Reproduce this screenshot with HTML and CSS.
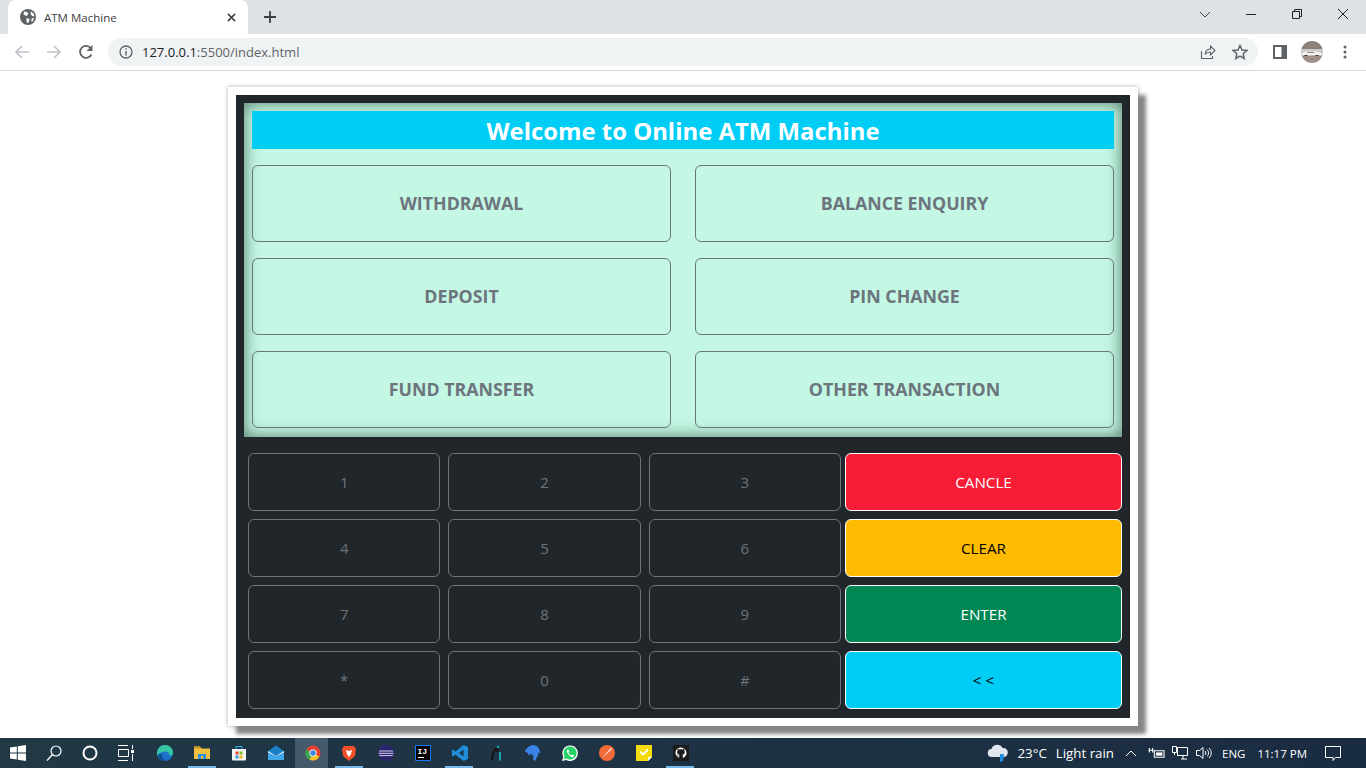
FILE: index.html
```html
<!DOCTYPE html>
<html lang="en">
<head>
    <meta charset="UTF-8">
    <meta name="viewport" content="width=device-width, initial-scale=1.0">
    <title>ATM Machine</title>
    <link rel="stylesheet" href="styles.css">
</head>
<body>
    <!-- browser window top -->
    <div class="tabstrip">
        <div class="tab">
            <svg class="favicon" viewBox="0 0 16 16"><circle cx="8" cy="8" r="8" fill="#5f6368"/><path d="M4 2.500l3 .5 1.500 2-2 2-3-1.500zM6.500 9l3 1-.5 2.500-1.500 2-1-2zM11 2.500l2.500 2 1 3-2.500-.5-1.500-2.500zM11.500 9.500l2.500-.5-1 3-1.500 1z" fill="#fff"/></svg>
            <span class="tab-title">ATM Machine</span>
            <svg class="tab-close" viewBox="0 0 10 10"><path d="M1 1l8 8M9 1l-8 8" stroke="#3c4043" stroke-width="1.700"/></svg>
        </div>
        <svg class="new-tab" viewBox="0 0 12 12"><path d="M6 0v12M0 6h12" stroke="#3c4043" stroke-width="1.800"/></svg>
        <div class="window-btns">
            <svg class="win-btn" viewBox="0 0 46 14"><path d="M18 5l5 5 5-5" fill="none" stroke="#3c4043"/></svg>
            <svg class="win-btn" viewBox="0 0 46 14"><path d="M18 7.500h10" fill="none" stroke="#202124"/></svg>
            <svg class="win-btn" viewBox="0 0 46 14"><path d="M18.500 4.500h7v7h-7zM20.500 4.500v-2h7v7h-2" fill="none" stroke="#202124"/></svg>
            <svg class="win-btn" viewBox="0 0 46 14"><path d="M18 2l10 10M28 2l-10 10" fill="none" stroke="#202124"/></svg>
        </div>
    </div>
    <div class="toolbar">
        <svg class="nav-icon nav-back" viewBox="0 0 16 16"><path d="M15 8H2M8 2L2 8l6 6" fill="none" stroke="#bdc1c6" stroke-width="1.600"/></svg>
        <svg class="nav-icon nav-forward" viewBox="0 0 16 16"><path d="M1 8h13M8 2l6 6-6 6" fill="none" stroke="#bdc1c6" stroke-width="1.600"/></svg>
        <svg class="nav-icon nav-reload" viewBox="0 0 16 16"><path d="M13.500 10.500A6 6 0 1 1 13 4.500" fill="none" stroke="#5f6368" stroke-width="1.800"/><path d="M14.500 1v6h-6z" fill="#5f6368"/></svg>
        <div class="omnibox">
            <svg class="info-icon" viewBox="0 0 14 14"><circle cx="7" cy="7" r="6" fill="none" stroke="#5f6368" stroke-width="1.300"/><path d="M7 6v4.500M7 3.300v1.500" stroke="#5f6368" stroke-width="1.400"/></svg>
            <span class="url"><span class="url-host">127.0.0.1</span>:5500/index.html</span>
            <svg class="omni-share" viewBox="0 0 16 16"><path d="M1.500 7v7.500h11V12M5 10.500C5.500 7 8 5 10.500 5V2l4.500 4.500-4.500 4.500V8C8.500 8 6.500 8.500 5 10.500z" fill="none" stroke="#5f6368" stroke-width="1.100"/></svg>
            <svg class="omni-star" viewBox="0 0 16 16"><path d="M8 1.500l2 4.500 4.800.5-3.600 3.200 1 4.800L8 12l-4.200 2.500 1-4.800L1.200 6.500 6 6z" fill="none" stroke="#5f6368" stroke-width="1.500"/></svg>
        </div>
        <svg class="side-panel" viewBox="0 0 14 14"><path d="M0 0h14v14H0z" fill="#5f6368"/><path d="M2 2h6.500v10H2z" fill="#fff"/></svg>
        <svg class="avatar" viewBox="0 0 22 22"><defs><clipPath id="avatarClip"><circle cx="11" cy="11" r="11"/></clipPath></defs><g clip-path="url(#avatarClip)"><path d="M0 0h22v8H0z" fill="#8d7f7a"/><path d="M0 8h22v6H0z" fill="#cdc9c8"/><path d="M0 14h22v8H0z" fill="#a08d87"/><path d="M1 12.500l4-2.500h8l6 1.500 2 1.500v1.500H1z" fill="#f4f3f3"/><path d="M6.500 10.800h6l1.500 1H5.500z" fill="#77716f"/><path d="M3.500 14.500h3M14.500 14.500h3" stroke="#333" stroke-width="1.200"/></g></svg>
        <svg class="menu-dots" viewBox="0 0 4 14"><circle cx="2" cy="2" r="1.500" fill="#5f6368"/><circle cx="2" cy="7" r="1.500" fill="#5f6368"/><circle cx="2" cy="12" r="1.500" fill="#5f6368"/></svg>
    </div>

    <!-- the page -->
    <main class="page">
        <div class="card">
            <div class="panel">
                <section class="screen">
                    <h1 class="welcome">Welcome to Online ATM Machine</h1>
                    <div class="options">
                        <button class="option">WITHDRAWAL</button>
                        <button class="option">BALANCE ENQUIRY</button>
                        <button class="option">DEPOSIT</button>
                        <button class="option">PIN CHANGE</button>
                        <button class="option">FUND TRANSFER</button>
                        <button class="option">OTHER TRANSACTION</button>
                    </div>
                </section>
                <section class="keypad">
                    <div class="digits">
                        <button class="key">1</button>
                        <button class="key">2</button>
                        <button class="key">3</button>
                        <button class="key">4</button>
                        <button class="key">5</button>
                        <button class="key">6</button>
                        <button class="key">7</button>
                        <button class="key">8</button>
                        <button class="key">9</button>
                        <button class="key">*</button>
                        <button class="key">0</button>
                        <button class="key">#</button>
                    </div>
                    <div class="actions">
                        <button class="action action-red">CANCLE</button>
                        <button class="action action-yellow">CLEAR</button>
                        <button class="action action-green">ENTER</button>
                        <button class="action action-cyan">&lt; &lt;</button>
                    </div>
                </section>
            </div>
        </div>
    </main>

    <!-- windows taskbar -->
    <footer class="taskbar">
        <div class="sys-icons">
            <div class="slot"><svg class="ico" viewBox="0 0 16 16"><path d="M0 2.500L6.800 1.500v6H0zM7.800 1.300L16 0v7.500H7.800zM0 8.500h6.800v6L0 13.500zM7.800 8.500H16V16l-8.200-1.300z" fill="#fff"/></svg></div>
            <div class="slot"><svg class="ico" viewBox="0 0 16 16"><circle cx="10" cy="6" r="5" fill="none" stroke="#fff" stroke-width="1.200"/><path d="M6.500 9.500L1 15.500" stroke="#fff" stroke-width="1.300"/></svg></div>
            <div class="slot"><svg class="ico" viewBox="0 0 16 16"><circle cx="8" cy="8" r="6.500" fill="none" stroke="#fff" stroke-width="2"/></svg></div>
            <div class="slot"><svg class="ico" viewBox="0 0 16 16"><path d="M0 .5h10M0 15.500h10M.5 4.500h10v7H.5z" fill="none" stroke="#fff"/><path d="M13 5h3v3h-3z" fill="#fff"/><path d="M14.500 0v4M14.500 9v7" stroke="#fff"/></svg></div>
        </div>
        <div class="apps">
            <div class="slot"><svg class="ico" viewBox="0 0 16 16"><circle cx="8" cy="8" r="8" fill="#1b74c9"/><path d="M0 8a8 8 0 0 1 16 0c0 2-2 3-4 2.500 1-2-.5-4-3.500-4C5 6.500 2 8 0 11z" fill="#37c6a0"/><path d="M5 9c-1 3 2 6 5 6.500C6 17 1 13 1 9z" fill="#0c4f96"/></svg></div>
            <div class="slot slot-open"><svg class="ico" viewBox="0 0 16 16"><path d="M0 1.500h6l1.500 2H16V14H0z" fill="#f3c03f"/><path d="M0 1.500h6l1.500 2H0z" fill="#c99320"/><path d="M4 9h8v5H4z" fill="#2f8fd8"/><path d="M7 11h2v3H7z" fill="#f3c03f"/></svg></div>
            <div class="slot"><svg class="ico" viewBox="0 0 16 16"><path d="M1 4h14v10.500a1 1 0 0 1-1 1H2a1 1 0 0 1-1-1z" fill="#f4f4f4"/><path d="M5 4V1.500h6V4" fill="none" stroke="#29b6e6"/><path d="M4.500 6.500h3v3h-3z" fill="#e8492e"/><path d="M8.500 6.500h3v3h-3z" fill="#7fba2a"/><path d="M4.500 10.500h3v3h-3z" fill="#2a9fe0"/><path d="M8.500 10.500h3v3h-3z" fill="#f6b81c"/></svg></div>
            <div class="slot"><svg class="ico" viewBox="0 0 16 16"><path d="M0 6l8-5.500L16 6v9H0z" fill="#1a7fc4"/><path d="M0 6l8 5 8-5v1.500l-8 4-8-4z" fill="#fff"/><path d="M0 7.500l8 4 8-4V15H0z" fill="#3fa9e8"/></svg></div>
            <div class="slot slot-active"><svg class="ico" viewBox="0 0 16 16"><circle cx="8" cy="8" r="7.500" fill="#e5432f"/><path d="M8 8L14.500 11.500A7.500 7.500 0 0 1 4 14.500z" fill="#f6c324"/><path d="M8 8L4.500 14.800A7.500 7.500 0 0 1 1.300 4.500z" fill="#38a852"/><circle cx="8" cy="8" r="3.600" fill="#fff"/><circle cx="8" cy="8" r="2.700" fill="#3b82e6"/></svg></div>
            <div class="slot slot-open"><svg class="ico" viewBox="0 0 16 16"><path d="M3 1h10l2 3-1 7-6 5-6-5-1-7z" fill="#f0502a"/><path d="M5 5l3 1 3-1-1 4-2 3-2-3z" fill="#fff"/></svg></div>
            <div class="slot"><svg class="ico" viewBox="0 0 16 16"><circle cx="8" cy="8" r="8" fill="#2d2470"/><path d="M1 6h14M.5 8.300h15M1.200 10.600h13.600" stroke="#d7d3ea" stroke-width="1"/></svg></div>
            <div class="slot"><svg class="ico" viewBox="0 0 16 16"><path d="M.5.5h15v15H.5z" fill="#000" stroke="#1479ff"/><path d="M3 12.500h6" stroke="#fff"/><text class="ij-text" x="2.500" y="9">IJ</text></svg></div>
            <div class="slot slot-open"><svg class="ico" viewBox="0 0 16 16"><path d="M11.500 0L16 2v12l-4.500 2L3.500 9.500 1 11.500 0 11V5l1-.5 2.500 2zM11.500 4.500L7 8l4.500 3.500z" fill="#1f8fdc"/></svg></div>
            <div class="slot"><svg class="ico" viewBox="0 0 16 16"><path d="M3 15.500C3.500 10 5 4 7.500 4c1 0 1 1 1 3" fill="none" stroke="#111" stroke-width="2"/><path d="M11 7v8.500" stroke="#19a3a8" stroke-width="2"/><circle cx="9" cy="1.800" r="1.300" fill="#19a3a8"/></svg></div>
            <div class="slot"><svg class="ico" viewBox="0 0 16 16"><path d="M0 6.500C1 3 5 0 8 0c3.500 0 6 2.500 6.500 5l1 3-2-.5c-.3 3-1.500 5-2.500 6.500l-.5 2-2.500-1.500c.8-2 .5-4-1-5L5 8.500 4.500 11 2.500 8z" fill="#3b82e6"/></svg></div>
            <div class="slot"><svg class="ico" viewBox="0 0 16 16"><path d="M0 16l1.200-4.200A7.800 7.800 0 1 1 4.300 15z" fill="#fff"/><path d="M1.800 14.200l.8-2.800A6.500 6.500 0 1 1 4.700 13.500z" fill="#25d366"/><path d="M5.500 4.500c-1 1-1 2.500 1 5s3.500 3 5 2.500l.7-1.500-2-1-1 .8C8.500 10.300 7 9 6.500 7.500l.8-1-.9-2z" fill="#fff"/></svg></div>
            <div class="slot"><svg class="ico" viewBox="0 0 16 16"><circle cx="8" cy="8" r="8" fill="#f26b38"/><path d="M3 13L12 3l1 1z" fill="#fff"/></svg></div>
            <div class="slot"><svg class="ico" viewBox="0 0 16 16"><path d="M0 0h16v12l-4 4H0z" fill="#f5dc0c"/><path d="M12 16v-4h4z" fill="#fff"/><path d="M4 6.500l3 3 5-5" fill="none" stroke="#fff" stroke-width="1.800"/></svg></div>
            <div class="slot slot-open"><svg class="ico" viewBox="0 0 16 16"><path d="M0 0h16v16H0z" fill="#1b1b1b"/><path d="M8 2.500c-3 0-5.500 2.300-5.500 5.300 0 2.300 1.500 4.300 3.700 5v-1.500c-1.500.3-1.900-.7-2-1.100-.3-.6-.7-.8-.7-.8.7-.1 1.100.6 1.200.8.600.9 1.300.7 1.600.5 0-.4.200-.7.400-.9-1.400-.2-2.600-.7-2.600-2.800 0-.6.200-1.100.6-1.500 0-.2-.2-.8.100-1.500 0 0 .6-.2 1.700.6a5 5 0 0 1 3 0c1.100-.8 1.700-.6 1.700-.6.300.7.100 1.300 0 1.500.4.400.6.900.6 1.500 0 2.100-1.200 2.600-2.500 2.800.3.200.5.600.5 1.200v2.100c2.200-.7 3.700-2.700 3.700-5 0-3-2.500-5.300-5.500-5.300z" fill="#fff"/></svg></div>
        </div>
        <div class="tray">
            <svg class="tray-cloud" viewBox="0 0 22 20"><path d="M5 14a4 4 0 0 1-.5-8A6 6 0 0 1 15.500 5 4.500 4.500 0 0 1 17 14z" fill="#dfe6ee"/><path d="M13 11h4l-1 7-3 1z" fill="#1d8fe0"/></svg>
            <span class="tray-temp">23°C</span>
            <span class="tray-weather">Light rain</span>
            <svg class="tray-chevron" viewBox="0 0 12 8"><path d="M1 7l5-5 5 5" fill="none" stroke="#fff"/></svg>
            <svg class="tray-battery" viewBox="0 0 16 12"><path d="M5.500 3.500h9v6h-9z" fill="none" stroke="#fff"/><path d="M7 5h6v3H7z" fill="#fff"/><path d="M1 1v4M4 1v4M0 3h5" stroke="#fff"/></svg>
            <svg class="tray-net" viewBox="0 0 16 14"><path d="M5.500 1.500h10v8h-10zM9 13h6M11 10v3" fill="none" stroke="#fff"/><path d="M.5.500h4v6h-4zM2.500 7v2" fill="none" stroke="#fff"/></svg>
            <svg class="tray-vol" viewBox="0 0 16 14"><path d="M.5 4.500h3L7 1.500v11l-3.500-3h-3z" fill="none" stroke="#fff"/><path d="M9 5c1 1 1 3 0 4M11 3.500c2 2 2 5 0 7M13 2c3 3 3 7 0 10" fill="none" stroke="#fff"/></svg>
            <span class="tray-lang">ENG</span>
            <span class="tray-time">11:17 PM</span>
            <svg class="tray-notify" viewBox="0 0 16 15"><path d="M.5.500h15v11h-5l-2.500 3v-3H.5z" fill="none" stroke="#fff"/></svg>
        </div>
    </footer>
</body>
</html>
```

FILE: styles.css
```css
* {
    box-sizing: border-box;
}

html, body {
    margin: 0;
    height: 768px;
    overflow: hidden;
}

body {
    display: flex;
    flex-direction: column;
    font-family: "Open Sans", "Noto Sans", sans-serif;
    background-color: #fff;
}

/* browser chrome */
.tabstrip {
    height: 34px;
    background-color: #dee1e6;
    display: flex;
    align-items: flex-start;
    padding-left: 8px;
}

.tab {
    width: 240px;
    height: 34px;
    background-color: #fff;
    border-radius: 8px 8px 0 0;
    display: flex;
    align-items: center;
    padding: 0 12px;
}

.favicon {
    width: 16px;
    height: 16px;
}

.tab-title {
    margin-left: 8px;
    font-size: 11.5px;
    color: #3c4043;
    flex: 1;
}

.tab-close {
    width: 9px;
    height: 9px;
}

.new-tab {
    width: 12px;
    height: 12px;
    margin: 11px 0 0 16px;
}

.window-btns {
    margin-left: auto;
    display: flex;
    margin-top: 7px;
}

.win-btn {
    width: 46px;
    height: 14px;
}

.toolbar {
    height: 37px;
    background-color: #fff;
    border-bottom: 1px solid #dadce0;
    display: flex;
    align-items: center;
    padding: 0 0 1px 14px;
}

.nav-icon {
    width: 16px;
    height: 16px;
}

.nav-forward {
    margin-left: 16px;
}

.nav-reload {
    margin-left: 16px;
}

.omnibox {
    width: 1150px;
    height: 28px;
    margin-left: 14px;
    border-radius: 14px;
    background-color: #f0f3f4;
    display: flex;
    align-items: center;
    padding-left: 11px;
}

.info-icon {
    width: 14px;
    height: 14px;
}

.url {
    margin-left: 9px;
    font-size: 13px;
    color: #5f6368;
}

.url-host {
    color: #202124;
}

.omni-share {
    width: 16px;
    height: 16px;
    margin-left: auto;
}

.omni-star {
    width: 16px;
    height: 16px;
    margin: 0 10px 0 16px;
}

.side-panel {
    width: 14px;
    height: 14px;
    margin-left: 15px;
}

.avatar {
    width: 22px;
    height: 22px;
    margin-left: 14px;
}

.menu-dots {
    width: 4px;
    height: 14px;
    margin-left: 20px;
}

/* page */
.page {
    flex: 1;
    display: flex;
    justify-content: center;
    align-items: flex-start;
    padding-top: 16px;
    min-height: 0;
}

.card {
    width: 910px;
    height: 639px;
    padding: 8px;
    background-color: #fff;
    box-shadow: 8px 8px 4px #868686, 0 0 4px rgba(0, 0, 0, 0.35);
}

.panel {
    height: 623px;
    padding: 8px 8px 9px;
    background-color: #20262a;
}

.screen {
    height: 334px;
    padding: 8px;
    background-color: #c4f7e4;
    box-shadow: inset 0 0 16px rgba(30, 70, 50, 0.7);
}

.welcome {
    margin: 0;
    height: 38px;
    line-height: 40px;
    text-align: center;
    font-size: 23.9px;
    font-weight: 700;
    color: #fff;
    background-color: #00cdf5;
}

.options {
    margin-top: 16px;
    display: grid;
    grid-template-columns: 419px 419px;
    justify-content: space-between;
    grid-auto-rows: 77px;
    row-gap: 16px;
}

button {
    font-family: inherit;
    cursor: pointer;
    border-radius: 6px;
    padding: 0;
}

.option {
    background-color: transparent;
    border: 1px solid #6c757d;
    color: #6c757d;
    font-size: 17.8px;
    font-weight: 700;
    padding-bottom: 2px;
}

.keypad {
    margin-top: 16px;
    display: flex;
    padding-left: 4px;
}

.digits {
    width: 593px;
    display: grid;
    grid-template-columns: repeat(3, 1fr);
    grid-auto-rows: 58px;
    gap: 8px;
}

.key {
    background-color: transparent;
    border: 1px solid #6c757d;
    color: #6c757d;
    font-size: 15px;
}

.actions {
    width: 277px;
    margin-left: 4px;
    display: grid;
    grid-auto-rows: 58px;
    row-gap: 8px;
}

.action {
    border: 1px solid #fff;
    font-size: 15.2px;
}

.action-red {
    background-color: #f81d37;
    color: #fff;
}

.action-yellow {
    background-color: #ffbb00;
    color: #000;
}

.action-green {
    background-color: #008754;
    color: #fff;
}

.action-cyan {
    background-color: #00cdf5;
    color: #000;
}

/* taskbar */
.taskbar {
    height: 30px;
    background: linear-gradient(to right, #213845, #1a2c42);
    display: flex;
    align-items: center;
    color: #fff;
}

.sys-icons {
    display: flex;
}

.sys-icons .slot {
    width: 36px;
}

.apps {
    display: flex;
    margin-left: 3px;
}

.slot {
    position: relative;
    width: 36.8px;
    height: 30px;
    display: flex;
    align-items: center;
    justify-content: center;
}

.slot-open::after {
    content: "";
    position: absolute;
    left: 4px;
    bottom: 0;
    width: 28px;
    height: 2px;
    background-color: #76b9ed;
}

.slot-active::before {
    content: "";
    position: absolute;
    left: 1px;
    top: 0;
    width: 33px;
    height: 30px;
    background-color: #44596a;
    border-bottom: 2px solid #76b9ed;
}

.ico {
    position: relative;
    width: 16px;
    height: 16px;
}

.ij-text {
    font-family: "Liberation Mono", monospace;
    font-size: 8px;
    font-weight: 700;
    fill: #fff;
}

.tray {
    margin-left: auto;
    display: flex;
    align-items: center;
    font-size: 13.3px;
    padding-right: 25px;
}

.tray-cloud {
    width: 22px;
    height: 20px;
}

.tray-temp {
    margin-left: 9px;
}

.tray-weather {
    margin-left: 9px;
}

.tray-chevron {
    width: 12px;
    height: 8px;
    margin-left: 11px;
}

.tray-battery {
    width: 18px;
    height: 13px;
    margin-left: 11px;
}

.tray-net {
    width: 16px;
    height: 14px;
    margin-left: 6px;
}

.tray-vol {
    width: 16px;
    height: 14px;
    margin-left: 8px;
}

.tray-lang {
    margin-left: 10px;
    font-size: 11.5px;
}

.tray-time {
    margin-left: 12px;
    font-size: 11.5px;
}

.tray-notify {
    width: 16px;
    height: 15px;
    margin-left: 18px;
}
```
